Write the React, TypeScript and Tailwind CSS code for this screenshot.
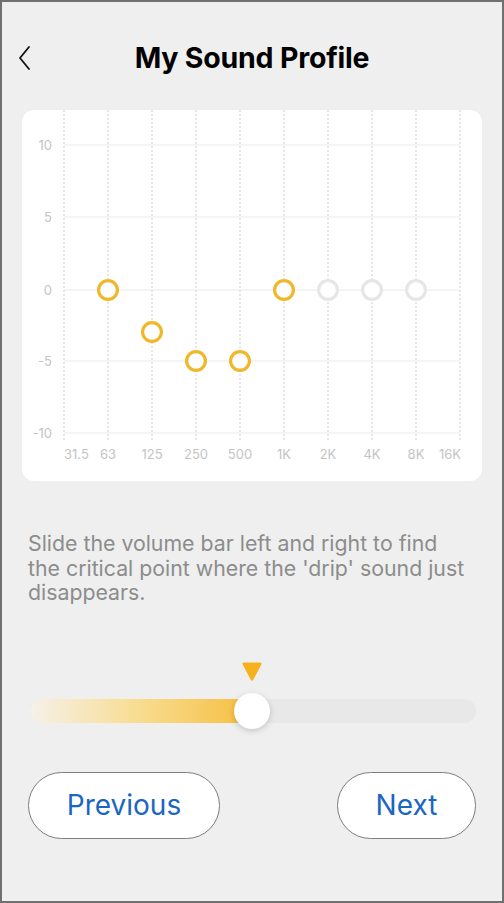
import React from 'react';

const bands = ['31.5', '63', '125', '250', '500', '1K', '2K', '4K', '8K', '16K'];
const yTicks = [
  { label: '10', y: 35 },
  { label: '5', y: 107 },
  { label: '0', y: 180 },
  { label: '-5', y: 251 },
  { label: '-10', y: 323 },
];
// measured points, done = already measured band
const points = [
  { i: 1, y: 180, done: true },
  { i: 2, y: 222, done: true },
  { i: 3, y: 251, done: true },
  { i: 4, y: 251, done: true },
  { i: 5, y: 180, done: true },
  { i: 6, y: 180, done: false },
  { i: 7, y: 180, done: false },
  { i: 8, y: 180, done: false },
];

const lineX = (i: number) => 42 + i * 44;

const EqChart: React.FC = () => (
  <svg width="460" height="371" viewBox="0 0 460 371" className="block">
    {yTicks.map((t) => (
      <g key={t.label}>
        <line x1={42} x2={438} y1={t.y} y2={t.y} stroke="#e9e9e9" strokeWidth={1} />
        <text
          x={30}
          y={t.y + 4.5}
          textAnchor="end"
          fontSize={13}
          fill="#c4c4c4"
          fontFamily="Inter, 'Noto Sans', sans-serif"
        >
          {t.label}
        </text>
      </g>
    ))}
    {bands.map((b, i) => (
      <line
        key={b}
        x1={lineX(i)}
        x2={lineX(i)}
        y1={0}
        y2={330}
        stroke="#cfcfcf"
        strokeWidth={1}
        strokeDasharray="2 2"
      />
    ))}
    {bands.map((b, i) => {
      let anchor: 'start' | 'middle' | 'end' = 'middle';
      let x = lineX(i);
      if (i === 0) anchor = 'start';
      if (i === bands.length - 1) {
        anchor = 'end';
        x = lineX(i) + 1;
      }
      return (
        <text
          key={b}
          x={x}
          y={349}
          textAnchor={anchor}
          fontSize={13}
          fill="#c4c4c4"
          fontFamily="Inter, 'Noto Sans', sans-serif"
        >
          {b}
        </text>
      );
    })}
    {points.map((p) => (
      <circle
        key={p.i}
        cx={lineX(p.i)}
        cy={p.y}
        r={9.4}
        fill="#fff"
        stroke={p.done ? '#f0b72a' : '#e6e6e6'}
        strokeWidth={3.2}
      />
    ))}
  </svg>
);

const App: React.FC = () => {
  return (
    <div
      className="w-[504px] h-[903px] bg-[#efefef] border-2 border-[#707070] overflow-hidden flex flex-col"
      style={{ fontFamily: "Inter, 'Noto Sans', sans-serif" }}
    >
      {/* Header */}
      <div className="relative mt-[20px] h-[72px] flex items-center justify-center">
        <button className="absolute left-[14px] top-[22px]">
          <svg width="20" height="28" viewBox="0 0 20 28" fill="none">
            <path d="M13 3 L4 14 L13 25" stroke="#111" strokeWidth={1.8} strokeLinecap="round" strokeLinejoin="round" />
          </svg>
        </button>
        <h1 className="text-[28.5px] font-bold text-black tracking-[-0.2px]">My Sound Profile</h1>
      </div>

      {/* Chart card */}
      <div className="mt-[16px] mx-[20px] h-[371px] bg-white rounded-xl overflow-hidden">
        <EqChart />
      </div>

      {/* Hint */}
      <p className="mt-[50px] pl-[26px] pr-[34px] text-[21.3px] leading-[24.5px] text-[#8c8c8c]">
        Slide the volume bar left and right to find the critical point where the 'drip' sound just disappears.
      </p>

      {/* Slider */}
      <div className="mt-[56px] ml-[28px] mr-[26px] flex flex-col">
        <svg className="ml-[211px]" width="22" height="21" viewBox="0 0 22 21">
          <path
            d="M3 1.5 H19 Q21.5 1.5 20.2 3.8 L12.4 18.6 Q11 21 9.6 18.6 L1.8 3.8 Q0.5 1.5 3 1.5 Z"
            fill="#f5b21c"
          />
        </svg>
        <div className="relative mt-[17px] h-[24px]">
          <div className="h-full rounded-full bg-[#e8e8e8] overflow-hidden">
            <div className="h-full w-[226px] rounded-full bg-gradient-to-r from-[#f6f1e8] via-[#f8db8c] to-[#f6bd33]" />
          </div>
          <div className="absolute left-[204px] top-[-6px] w-[36px] h-[36px] rounded-full bg-white shadow-[0_2px_6px_rgba(0,0,0,0.18)]" />
        </div>
      </div>

      {/* Nav buttons */}
      <div className="mt-[49px] px-[26px] flex justify-between">
        <button className="w-[192px] h-[67px] rounded-full bg-white border border-[#7d7d7d] text-[#1a66c2] text-[28px]">
          Previous
        </button>
        <button className="w-[139px] h-[67px] rounded-full bg-white border border-[#7d7d7d] text-[#1a66c2] text-[28px]">
          Next
        </button>
      </div>
    </div>
  );
};

export default App;
